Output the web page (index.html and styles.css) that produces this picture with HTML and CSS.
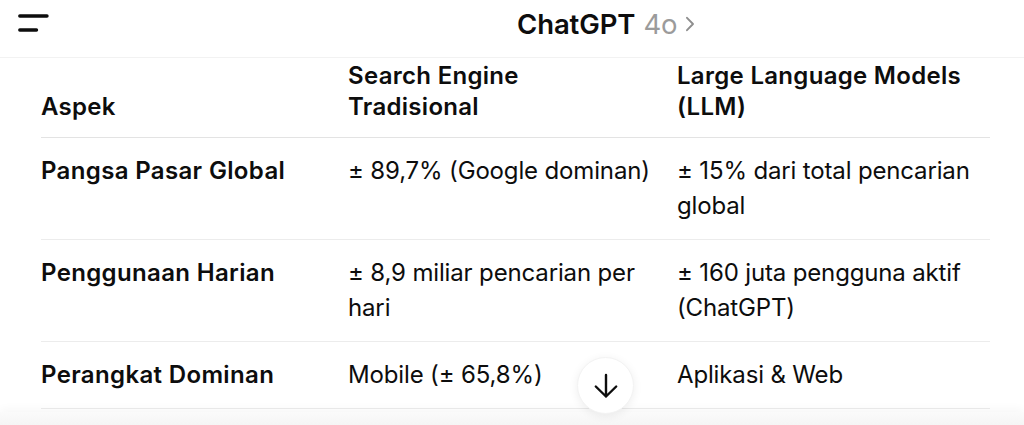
FILE: index.html
```html
<!DOCTYPE html>
<html lang="id">
<head>
<meta charset="utf-8">
<title>ChatGPT</title>
<link rel="stylesheet" href="styles.css">
</head>
<body>
<header class="topbar">
  <button class="menu" aria-label="Menu">
    <svg width="34" height="22" viewBox="0 0 34 22"><path d="M3.8 5H31M3.8 19H20.5" stroke="#0d0d0d" stroke-width="3.4" stroke-linecap="round" fill="none"/></svg>
  </button>
  <div class="title">ChatGPT<span class="model">4o</span><svg class="chev" width="12" height="16" viewBox="0 0 12 16"><path d="M3 1.8L9 8L3 14.2" stroke="#8e8e8e" stroke-width="1.9" stroke-linecap="round" stroke-linejoin="round" fill="none"/></svg></div>
</header>
<main class="content">
  <table class="cmp">
    <colgroup><col class="c1"><col class="c2"><col class="c3"></colgroup>
    <thead>
      <tr><th>Aspek</th><th>Search Engine Tradisional</th><th class="last">Large Language Models (LLM)</th></tr>
    </thead>
    <tbody>
      <tr><td class="k">Pangsa Pasar Global</td><td>± 89,7% (Google dominan)</td><td class="last">± 15% dari total pencarian global</td></tr>
      <tr><td class="k">Penggunaan Harian</td><td>± 8,9 miliar pencarian per hari</td><td class="last">± 160 juta pengguna aktif (ChatGPT)</td></tr>
      <tr><td class="k">Perangkat Dominan</td><td>Mobile (± 65,8%)</td><td class="last">Aplikasi &amp; Web</td></tr>
    </tbody>
  </table>
</main>
<button class="scrolldown" aria-label="Scroll down">
  <svg width="26" height="26" viewBox="0 0 26 26"><path d="M13 2V23.5M2.8 13.5L13 23.5L23.2 13.5" stroke="#0d0d0d" stroke-width="2.4" stroke-linecap="round" stroke-linejoin="round" fill="none"/></svg>
</button>
<div class="composer-edge"></div>
</body>
</html>
```
FILE: styles.css
```css
html, body {
  margin: 0;
  padding: 0;
  background: #fff;
  height: 425px;
  overflow: hidden;
}
body {
  font-family: Inter, "Noto Sans", sans-serif;
  color: #0d0d0d;
  position: relative;
}
.topbar {
  height: 58px;
  box-sizing: border-box;
  border-bottom: 1px solid #f2f2f2;
  display: flex;
  align-items: center;
  padding: 0 0 10px 517px;
  position: relative;
}
.menu {
  position: absolute;
  left: 16px;
  top: 11px;
  border: 0;
  background: none;
  padding: 0;
  display: flex;
}
.title {
  font-size: 27.5px;
  font-weight: 600;
  letter-spacing: -0.1px;
  display: flex;
  align-items: center;
  line-height: 32px;
}
.model {
  color: #9b9b9b;
  font-weight: 400;
  margin-left: 8px;
}
.chev {
  margin-left: 7px;
  margin-top: 1px;
}
.content {
  padding: 0 34px 0 41px;
}
.cmp {
  width: 949px;
  border-collapse: collapse;
  table-layout: fixed;
  font-size: 24px;
  letter-spacing: -0.15px;
}
.c1 { width: 307px; }
.c2 { width: 329px; }
.c3 { width: 313px; }
.cmp th {
  text-align: left;
  vertical-align: bottom;
  font-weight: 600;
  letter-spacing: 0.3px;
  line-height: 31px;
  padding: 2px 24px 15px 0;
  border-bottom: 1px solid #e3e3e3;
}
.cmp td {
  vertical-align: top;
  line-height: 35px;
  padding: 15px 24px 16px 0;
  border-bottom: 1px solid #ececec;
}
.cmp .last {
  padding-right: 14px;
}
.cmp td.k {
  font-weight: 600;
  letter-spacing: 0.35px;
}
.scrolldown {
  position: absolute;
  left: 577px;
  top: 357px;
  width: 57px;
  height: 57px;
  border-radius: 50%;
  background: #fff;
  border: 1px solid #f3f3f3;
  box-shadow: 0 2px 10px rgba(0,0,0,0.07);
  display: flex;
  align-items: center;
  justify-content: center;
  padding: 0;
  z-index: 3;
}
.composer-edge {
  position: absolute;
  left: 0;
  right: 0;
  top: 412px;
  height: 13px;
  background: linear-gradient(#fbfbfb, #f5f5f5);
  box-shadow: 0 -3px 10px rgba(0,0,0,0.035);
  z-index: 2;
}
```
